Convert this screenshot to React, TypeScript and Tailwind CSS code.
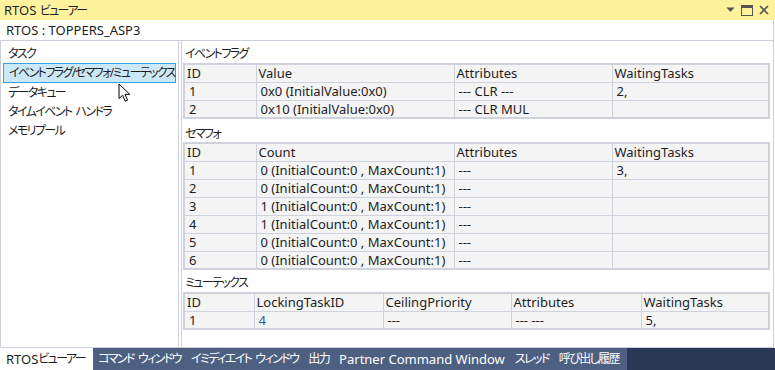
import React from 'react'

type Col = { name: string; w: number }

const flagCols: Col[] = [
  { name: 'ID', w: 72 },
  { name: 'Value', w: 198 },
  { name: 'Attributes', w: 158 },
  { name: 'WaitingTasks', w: 157 },
]

const semCols: Col[] = [
  { name: 'ID', w: 72 },
  { name: 'Count', w: 198 },
  { name: 'Attributes', w: 158 },
  { name: 'WaitingTasks', w: 157 },
]

const mtxCols: Col[] = [
  { name: 'ID', w: 70 },
  { name: 'LockingTaskID', w: 129 },
  { name: 'CeilingPriority', w: 128 },
  { name: 'Attributes', w: 130 },
  { name: 'WaitingTasks', w: 128 },
]

const flagRows = [
  ['1', '0x0 (InitialValue:0x0)', '--- CLR ---', '2,'],
  ['2', '0x10 (InitialValue:0x0)', '--- CLR MUL', ''],
]

const semRows = [
  ['1', '0 (InitialCount:0 , MaxCount:1)', '---', '3,'],
  ['2', '0 (InitialCount:0 , MaxCount:1)', '---', ''],
  ['3', '1 (InitialCount:0 , MaxCount:1)', '---', ''],
  ['4', '1 (InitialCount:0 , MaxCount:1)', '---', ''],
  ['5', '0 (InitialCount:0 , MaxCount:1)', '---', ''],
  ['6', '0 (InitialCount:0 , MaxCount:1)', '---', ''],
]

const mtxRows = [['1', '4', '---', '--- ---', '5,']]

// 日本語部分は Meiryo UI に近づけるため詰める（空白は少し広めに残す）
function Jp({ t }: { t: string }) {
  const words = t.split(' ')
  return (
    <span className="text-[12px] tracking-[-1.6px]">
      {words.map((w, i) => (
        <React.Fragment key={i}>
          {i > 0 && <span className="inline-block w-[4px]" />}
          {w}
        </React.Fragment>
      ))}
    </span>
  )
}

function Table({ cols, rows, link }: { cols: Col[]; rows: string[][]; link?: number }) {
  return (
    <table className="table-fixed border-collapse border-2 border-[#cfd1dc] w-[585px]">
      <colgroup>
        {cols.map((c) => (
          <col key={c.name} style={{ width: c.w }} />
        ))}
      </colgroup>
      <thead>
        <tr>
          {cols.map((c) => (
            <td key={c.name} className="border border-[#cfd1dc] bg-[#f4f4f4] h-[18px] p-0 pl-[2px] leading-[16px] whitespace-nowrap">
              {c.name}
            </td>
          ))}
        </tr>
      </thead>
      <tbody>
        {rows.map((r, i) => (
          <tr key={i}>
            {r.map((v, j) => (
              <td
                key={j}
                className={
                  j === link
                    ? 'border border-[#cfd1dc] bg-[#f4f4f4] h-[18px] p-0 pl-[4px] leading-[16px] whitespace-nowrap text-[#1a5ea8]'
                    : 'border border-[#cfd1dc] bg-[#f4f4f4] h-[18px] p-0 pl-[4px] leading-[16px] whitespace-nowrap'
                }
              >
                {v}
              </td>
            ))}
          </tr>
        ))}
      </tbody>
    </table>
  )
}

const tabs: React.ReactNode[] = [
  <Jp t="コマンド ウィンドウ" />,
  <Jp t="イミディエイト ウィンドウ" />,
  <Jp t="出力" />,
  'Partner Command Window',
  <Jp t="スレッド" />,
  <Jp t="呼び出し履歴" />,
]

export default function App() {
  return (
    <div className="w-[775px] h-[370px] flex flex-col bg-white overflow-hidden text-[13px] leading-[16px] text-[#1e1e1e] font-['Noto_Sans','Noto_Sans_CJK_JP',sans-serif] [font-feature-settings:'palt']">
      {/* タイトルバー */}
      <div className="h-[20px] shrink-0 bg-[#fff29d] flex items-center justify-between pl-[4px] pr-[6px]">
        <span className="whitespace-nowrap">
          RTOS <Jp t="ビューアー" />
        </span>
        <div className="flex items-center gap-[6px]">
          <svg width="9" height="6" viewBox="0 0 9 6">
            <path d="M0.5 0.5 L8.5 0.5 L4.5 5 Z" fill="#555" />
          </svg>
          <svg width="12" height="11" viewBox="0 0 12 11">
            <rect x="0.5" y="0.5" width="11" height="10" fill="none" stroke="#555" />
            <rect x="0.5" y="0.5" width="11" height="2.5" fill="#555" />
          </svg>
          <svg width="10" height="10" viewBox="0 0 10 10">
            <path d="M1 1 L9 9 M9 1 L1 9" stroke="#555" strokeWidth="1.6" />
          </svg>
        </div>
      </div>

      <div className="flex-1 flex flex-col mr-[1px] border-r border-[#cccedb]">
        <div className="h-[20px] shrink-0 flex items-center pl-[6px]">RTOS : TOPPERS_ASP3</div>

        <div className="flex-1 flex border-t border-b border-l border-[#cccedb]">
          {/* 左リスト */}
          <div className="relative w-[178px] shrink-0 border-r border-[#cccedb] pt-[3px] whitespace-nowrap">
            <div className="h-[19px] flex items-center pl-[7px]"><Jp t="タスク" /></div>
            <div className="h-[20px] mx-[2px] flex items-center pl-[5px] bg-[#cce8f7] border border-[#36a3de]">
              <Jp t="イベントフラグ/セマフォ/ミューテックス" />
            </div>
            <div className="h-[19px] flex items-center pl-[7px]"><Jp t="データキュー" /></div>
            <div className="h-[19px] flex items-center pl-[7px]"><Jp t="タイムイベント ハンドラ" /></div>
            <div className="h-[19px] flex items-center pl-[7px]"><Jp t="メモリプール" /></div>
            <svg className="absolute left-[117px] top-[42px]" width="13" height="20" viewBox="0 0 13 20">
              <path d="M1 1 L1 15.5 L4.6 12.2 L7.2 18.2 L9.6 17.2 L7 11.3 L11.8 11.3 Z" fill="#fff" stroke="#000" strokeWidth="1" strokeLinejoin="round" />
            </svg>
          </div>

          {/* 右ペイン */}
          <div className="flex-1 ml-[2px] border-l border-[#cccedb] pl-[1px]">
            <div className="h-[22px] pt-[4px] pl-[2px]"><Jp t="イベントフラグ" /></div>
            <Table cols={flagCols} rows={flagRows} />
            <div className="h-[23px] pt-[6px] pl-[2px]"><Jp t="セマフォ" /></div>
            <Table cols={semCols} rows={semRows} />
            <div className="h-[22px] pt-[4px] pl-[2px]"><Jp t="ミューテックス" /></div>
            <Table cols={mtxCols} rows={mtxRows} link={1} />
          </div>
        </div>
      </div>

      {/* 下部タブ */}
      <div className="h-[22px] shrink-0 flex bg-[#293955] whitespace-nowrap">
        <div className="w-[93px] bg-white flex items-center pl-[6px]">
          RTOS <Jp t="ビューアー" />
        </div>
        <div className="flex bg-[#4d6082] text-white pr-[3px]">
          {tabs.map((t, i) => (
            <div key={i} className="flex items-center px-[5px]">
              {t}
            </div>
          ))}
        </div>
      </div>
    </div>
  )
}
